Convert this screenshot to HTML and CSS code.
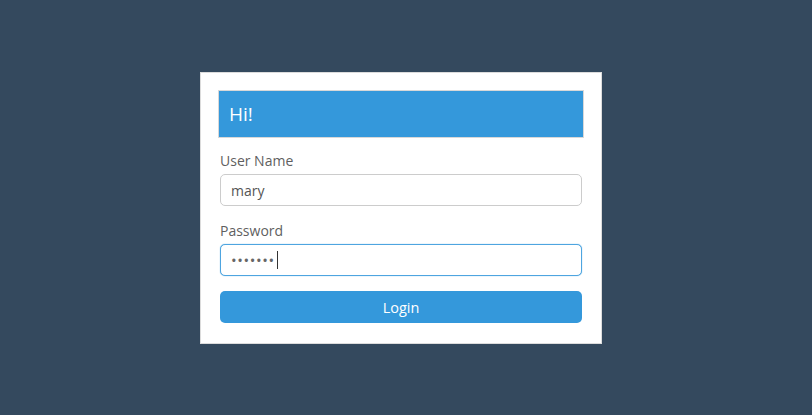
FILE: index.html
```html
<!DOCTYPE html>
<html>
<head>
<meta charset="utf-8">
<link rel="stylesheet" href="styles.css">
</head>
<body>
<div class="page">
  <div class="card">
    <div class="card-header">Hi!</div>
    <form class="form">
      <label class="label" for="user">User Name</label>
      <input class="input" id="user" type="text" value="mary">
      <label class="label label-pass" for="pass">Password</label>
      <div class="field">
        <input class="input input-focus" id="pass" type="password" value="mary123">
        <span class="caret"></span>
      </div>
      <button class="btn" type="button">Login</button>
    </form>
  </div>
</div>
</body>
</html>
```
FILE: styles.css
```css
* { box-sizing: border-box; }
html, body { margin: 0; height: 100%; }
body {
  background: #34495e;
  font-family: "Open Sans", "Noto Sans", sans-serif;
}
.page {
  padding-top: 72px;
  padding-right: 10px;
  display: flex;
  justify-content: center;
}
.card {
  width: 402px;
  background: #fff;
  border: 1px solid #dcdcdc;
  padding: 17px 17px 20px;
}
.card-header {
  background: #3498db;
  border: 1px solid #d8d8d8;
  height: 48px;
  color: #fff;
  font-size: 19px;
  line-height: 46px;
  padding-left: 10px;
}
.form {
  display: flex;
  flex-direction: column;
  padding: 0 2px;
}
.label {
  color: #5f5f5f;
  font-size: 14px;
  line-height: 18px;
  margin-top: 14px;
  margin-bottom: 4px;
}
.label-pass { margin-top: 16px; }
.field {
  position: relative;
  display: flex;
  flex-direction: column;
}
.input {
  height: 32px;
  border: 1px solid #cccccc;
  border-radius: 5px;
  padding: 0 10px;
  font-family: inherit;
  font-size: 14px;
  color: #555;
  outline: none;
}
.input-focus {
  border-color: #4ea5e0;
  box-shadow: 0 0 1px #4ea5e0;
  color: #666;
  letter-spacing: 0.6px;
  font-size: 15px;
}
.caret {
  position: absolute;
  left: 57px;
  top: 7px;
  width: 1px;
  height: 18px;
  background: #333;
}
.btn {
  margin-top: 15px;
  height: 32px;
  background: #3498db;
  border: none;
  border-radius: 5px;
  color: #fff;
  font-family: inherit;
  font-size: 14.5px;
  cursor: pointer;
}
```
